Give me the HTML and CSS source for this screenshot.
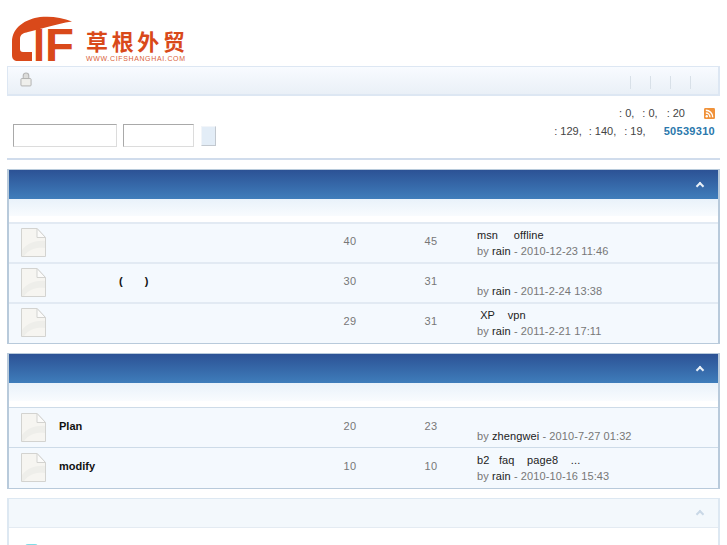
FILE: index.html

```html
<!DOCTYPE html>
<html lang="zh-CN">
<head>
  <meta charset="UTF-8" />
  <title>CIF</title>
  <link rel="stylesheet" href="styles.css">
</head>
<body>
  <div class="logo">
    <svg width="190" height="62" viewBox="7 0 190 62">
      <path class="logo-red" d="M72 11.500 C62 7 50 6 40 7 C26 9 12 17 12 32 L12 45 C12 49 14 51 18 51 L32 51 L32 42 L23 42 C21 42 20 41 20 39 L20 29 C20 24 24 23 28 22 C38 20 55 14 72 11.500 Z"/>
      <text class="logo-cif" x="33" y="51" textLength="12" lengthAdjust="spacingAndGlyphs">I</text>
      <text class="logo-cif" x="45" y="51" textLength="29" lengthAdjust="spacingAndGlyphs">F</text>
      <text class="logo-cn" x="86" y="40" textLength="99">草根外贸</text>
      <text class="logo-url" x="86" y="51" textLength="99">WWW.CIFSHANGHAI.COM</text>
    </svg>
  </div>

  <div class="menu">
    <svg class="lock" width="12" height="16" viewBox="0 0 13 16">
      <path d="M3.500 8 V4.500 C3.500 0.500 9.500 0.500 9.500 4.500 V8 Z" fill="#dcdcda" stroke="#b5b5b5" stroke-width="1.200"/>
      <rect x="1" y="7.500" width="11" height="8" rx="1" fill="#efefec" stroke="#b0b0ae"/>
    </svg>
    <ul class="menu-links">
      <li></li>
      <li></li>
      <li></li>
      <li></li>
    </ul>
  </div>

  <div class="info">
    <form class="login">
      <input class="user" type="text" />
      <input class="pass" type="password" />
      <button class="go" type="button"></button>
    </form>
    <div class="stats">
      <p class="line">
        <span class="s1">: 0,</span>
        <span class="s2">: 0,</span>
        <span class="s3">: 20</span>
        <svg class="rss" width="11" height="11" viewBox="0 0 12 12">
          <rect width="12" height="12" rx="1.500" fill="#f0923a"/>
          <circle cx="3" cy="9" r="1.300" fill="#fff"/>
          <path d="M2 5.500 A4.500 4.500 0 0 1 6.500 10 M2 2.500 A7.500 7.500 0 0 1 9.500 10" fill="none" stroke="#fff" stroke-width="1.500"/>
        </svg>
      </p>
      <p class="line">
        <span class="s4">: 129,</span>
        <span class="s5">: 140,</span>
        <span class="s6">: 19,</span>
        <a class="newest" href="#">50539310</a>
      </p>
    </div>
  </div>

  <div class="section">
    <div class="sec-head"><span class="fold"></span></div>
    <div class="sec-thead short"></div>
    <div class="row">
      <svg class="doc" viewBox="0 0 25 29"><path d="M.5.5 H16 L24.500 9.500 V28.500 H.5 Z" fill="#f6f5f1" stroke="#d3d3d0"/><path d="M1 22 C6 15 16 12 24 13 V20 C16 19 8 21 3 28 H1 Z" fill="#eeeeea"/><path d="M16 .5 V9.500 H24.500 Z" fill="#fbfbfa" stroke="#d3d3d0"/></svg>
      <a class="title" href="#"></a><span class="num">40</span><span class="num">45</span>
      <div class="last"><a href="#">msn&nbsp;&nbsp;&nbsp;&nbsp;&nbsp;offline</a><p>by <b>rain</b> - 2010-12-23 11:46</p></div>
    </div>
    <div class="row">
      <svg class="doc" viewBox="0 0 25 29"><path d="M.5.5 H16 L24.500 9.500 V28.500 H.5 Z" fill="#f6f5f1" stroke="#d3d3d0"/><path d="M1 22 C6 15 16 12 24 13 V20 C16 19 8 21 3 28 H1 Z" fill="#eeeeea"/><path d="M16 .5 V9.500 H24.500 Z" fill="#fbfbfa" stroke="#d3d3d0"/></svg>
      <a class="title" href="#"><span class="paren">(</span><span class="paren2">)</span></a><span class="num">30</span><span class="num">31</span>
      <div class="last"><a href="#">&nbsp;</a><p>by <b>rain</b> - 2011-2-24 13:38</p></div>
    </div>
    <div class="row">
      <svg class="doc" viewBox="0 0 25 29"><path d="M.5.5 H16 L24.500 9.500 V28.500 H.5 Z" fill="#f6f5f1" stroke="#d3d3d0"/><path d="M1 22 C6 15 16 12 24 13 V20 C16 19 8 21 3 28 H1 Z" fill="#eeeeea"/><path d="M16 .5 V9.500 H24.500 Z" fill="#fbfbfa" stroke="#d3d3d0"/></svg>
      <a class="title" href="#"></a><span class="num">29</span><span class="num">31</span>
      <div class="last"><a href="#">&nbsp;XP&nbsp;&nbsp;&nbsp;&nbsp;vpn</a><p>by <b>rain</b> - 2011-2-21 17:11</p></div>
    </div>
  </div>

  <div class="section">
    <div class="sec-head"><span class="fold"></span></div>
    <div class="sec-thead"></div>
    <div class="row dark">
      <svg class="doc" viewBox="0 0 25 29"><path d="M.5.5 H16 L24.500 9.500 V28.500 H.5 Z" fill="#f6f5f1" stroke="#d3d3d0"/><path d="M1 22 C6 15 16 12 24 13 V20 C16 19 8 21 3 28 H1 Z" fill="#eeeeea"/><path d="M16 .5 V9.500 H24.500 Z" fill="#fbfbfa" stroke="#d3d3d0"/></svg>
      <a class="title" href="#">Plan</a><span class="num">20</span><span class="num">23</span>
      <div class="last"><a href="#">&nbsp;</a><p>by <b>zhengwei</b> - 2010-7-27 01:32</p></div>
    </div>
    <div class="row dark">
      <svg class="doc" viewBox="0 0 25 29"><path d="M.5.5 H16 L24.500 9.500 V28.500 H.5 Z" fill="#f6f5f1" stroke="#d3d3d0"/><path d="M1 22 C6 15 16 12 24 13 V20 C16 19 8 21 3 28 H1 Z" fill="#eeeeea"/><path d="M16 .5 V9.500 H24.500 Z" fill="#fbfbfa" stroke="#d3d3d0"/></svg>
      <a class="title" href="#">modify</a><span class="num">10</span><span class="num">10</span>
      <div class="last"><a href="#">b2&nbsp;&nbsp;&nbsp;faq&nbsp;&nbsp;&nbsp;&nbsp;page8&nbsp;&nbsp;&nbsp;&nbsp;...</a><p>by <b>rain</b> - 2010-10-16 15:43</p></div>
    </div>
  </div>

  <div class="section pale">
    <div class="sec-head"><span class="fold"></span></div>
    <div class="sec-body"><span class="teal"></span></div>
  </div>
</body>
</html>
```

FILE: styles.css

```css
html {
  overflow: hidden;
}

body {
  margin: 0;
  padding: 0 7px;
  height: 545px;
  overflow: hidden;
  background: #fff;
  font-family: "Liberation Sans", Arial, sans-serif;
  font-size: 11px;
  color: #333;
}

a {
  color: #222;
  text-decoration: none;
}

p {
  margin: 0;
}

.logo {
  height: 66px;
  padding-top: 10px;
  box-sizing: border-box;
}

.logo svg {
  display: block;
}

.logo-red {
  fill: #d9491a;
}

.logo-cif {
  fill: #d9491a;
  font-family: "Liberation Sans", sans-serif;
  font-weight: bold;
  font-size: 47px;
}

.logo-cn {
  fill: #d9491a;
  font-family: "Noto Sans CJK SC", sans-serif;
  font-weight: bold;
  font-size: 22px;
}

.logo-url {
  fill: #d9623a;
  font-family: "Liberation Sans", sans-serif;
  font-size: 7px;
}

.menu {
  position: relative;
  height: 30px;
  box-sizing: border-box;
  border: 1px solid #dde7f3;
  border-width: 1px 2px 2px 1px;
  background: linear-gradient(#f8fbff, #eaf0f7);
  display: flex;
  align-items: center;
  justify-content: space-between;
  padding: 0 8px 0 12px;
}

.lock {
  display: block;
  margin-bottom: 4px;
}

.menu-links {
  display: flex;
  list-style: none;
  margin: 0;
  padding: 0;
}

.menu-links li {
  width: 20px;
  height: 13px;
  border-left: 1px solid #d8e0e8;
  box-sizing: border-box;
  margin-top: 3px;
}

.info {
  height: 64px;
  box-sizing: border-box;
  display: flex;
  justify-content: space-between;
  padding: 11px 5px 11px 6px;
  border-bottom: 2px solid #d0dcec;
}

.login {
  display: flex;
  gap: 6px;
  align-self: flex-end;
  align-items: center;
}

.login input {
  height: 23px;
  box-sizing: border-box;
  margin: 0;
  padding: 0;
  background: #fff;
  border: 1px solid #dcdcdc;
  border-top: 1px solid #a9a9a9;
  border-left: 1px solid #a9a9a9;
}

.user {
  width: 104px;
}

.pass {
  width: 71px;
}

.go {
  width: 15px;
  height: 20px;
  margin-left: 1px;
  padding: 0;
  background: #e3edf7;
  border: 1px solid #f2f5f9;
  border-right: 1px solid #c2c8cf;
  border-bottom: 1px solid #c2c8cf;
}

.stats {
  display: flex;
  flex-direction: column;
  gap: 5px;
}

.line {
  height: 13px;
  line-height: 13px;
  display: flex;
  justify-content: flex-end;
  align-items: center;
  color: #444;
}

.s1 {
  margin-right: 8px;
}

.s2 {
  margin-right: 9px;
}

.s3 {
  margin-right: 19px;
}

.s4 {
  margin-right: 7px;
}

.s5 {
  margin-right: 8px;
}

.s6 {
  margin-right: 18px;
}

.rss {
  display: block;
  margin-top: -1px;
}

.newest {
  color: #2a78ac;
  font-weight: bold;
  letter-spacing: 0.3px;
}

.section {
  margin-top: 9px;
  border: 1px solid #b8cadb;
  border-width: 1px 2px 1px 2px;
  background: #f4f9fe;
}

.sec-head {
  height: 29px;
  box-sizing: border-box;
  display: flex;
  justify-content: flex-end;
  align-items: center;
  padding-right: 15px;
  background: linear-gradient(#2c5295, #3f7dbb);
}

.fold {
  width: 4px;
  height: 4px;
  margin-top: 2px;
  border: solid #e8f0f8;
  border-width: 2px 0 0 2px;
  transform: rotate(45deg);
}

.sec-thead {
  height: 24px;
  box-sizing: border-box;
  background: linear-gradient(#e9f2fa, #f8fbfe 72%, #fff 76%);
}

.sec-thead.short {
  height: 23px;
}

.row {
  height: 40px;
  box-sizing: border-box;
  border-top: 2px solid #e2eaf3;
  display: grid;
  grid-template-columns: 50px 251px 80px 82px 1fr;
  align-items: center;
}

.row:last-child {
  height: 41px;
  padding-bottom: 1px;
}

.row.dark {
  border-top: 1px solid #cddbe8;
}

.doc {
  display: block;
  width: 25px;
  height: 29px;
  margin: 0 0 1px 12px;
}

.title {
  font-weight: bold;
  color: #111;
  white-space: nowrap;
  margin-bottom: 4px;
}

.paren {
  margin-left: 60px;
}

.paren2 {
  margin-left: 22px;
}

.num {
  text-align: center;
  color: #777;
  letter-spacing: 0.3px;
  margin-bottom: 4px;
}

.last {
  padding-left: 5px;
  white-space: nowrap;
  line-height: 16px;
  letter-spacing: 0.1px;
  color: #777;
}

.last b {
  font-weight: normal;
  color: #222;
}

.section.pale {
  border-color: #dde8f2;
  background: #fff;
}

.pale .sec-head {
  background: #f3f8fc;
  border-bottom: 1px solid #e4ebf2;
}

.pale .fold {
  border-color: #c9d8e6;
}

.sec-body {
  height: 60px;
  padding: 16px 0 0 16px;
  box-sizing: border-box;
}

.teal {
  display: block;
  width: 13px;
  height: 13px;
  border-radius: 3px;
  background: #7fdce6;
}
```
